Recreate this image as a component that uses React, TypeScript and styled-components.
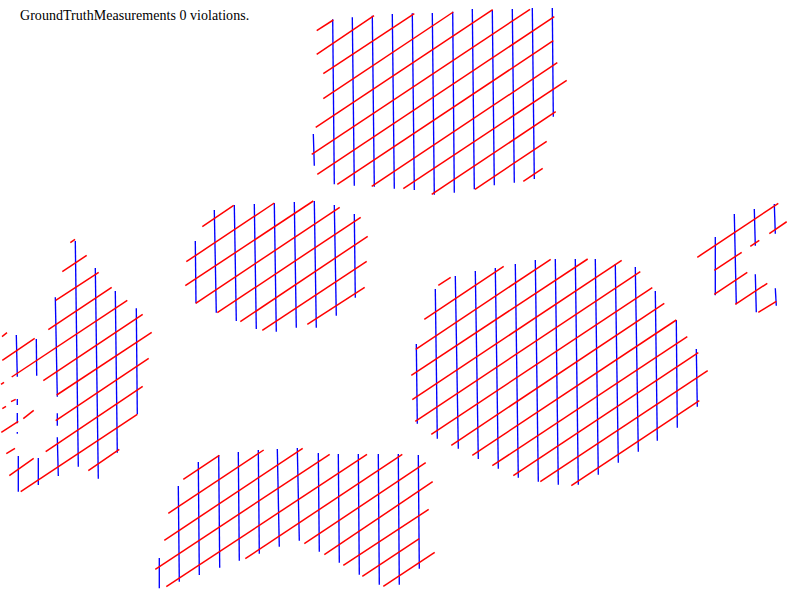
import React from 'react'
import styled, { createGlobalStyle } from 'styled-components'

// x1, y1, x2, y2
type Seg = [number, number, number, number]
type Patch = { blue: Seg[]; red: Seg[] }

const patches: Patch[] = [
  {
    // top
    blue: [
      [332.7, 19.3, 334.3, 184.3], [352.3, 17.3, 354.3, 185.7], [372.3, 15.7, 374.3, 186.7],
      [392.3, 14, 394.3, 188.7], [412.3, 13.3, 414.3, 190], [432.3, 13, 434.3, 194.7],
      [452.7, 11.7, 454.3, 192.7], [472.3, 9, 474.3, 189.3], [492.3, 10, 494.3, 185.3],
      [512.3, 9, 514.3, 182.7], [532.3, 8, 534.3, 179], [552.3, 8, 553.3, 116.7],
      [313.3, 134, 314.3, 165.7],
    ],
    red: [
      [316.7, 30.7, 333.3, 20], [316.7, 54.3, 374, 15.7], [323.3, 73.7, 414.3, 13.7],
      [323.3, 98.7, 453.3, 12], [315.7, 127.3, 492.7, 9.7], [311.7, 154.3, 530, 9.3],
      [317.3, 174.3, 554.3, 16.7], [337.3, 184.3, 553.3, 40.7], [371.7, 186.3, 557.3, 62.7],
      [403.3, 188.7, 566.7, 80.3], [431.7, 194.3, 555.7, 111.7], [475, 189.3, 546.7, 141.3],
      [523.3, 181.3, 542.7, 168.3],
    ],
  },
  {
    // left
    blue: [
      [75.3, 241, 78.3, 466.7], [95.3, 268, 98.3, 478.7], [55.3, 297.3, 57.3, 396.7],
      [115.3, 291, 117.3, 452.7], [136.3, 308.3, 137.3, 414.3], [16.3, 335, 17.3, 376.7],
      [36.3, 339, 36.7, 375.7], [57.3, 413.3, 57.3, 425.7], [57.3, 437.3, 58.3, 476],
      [18.3, 456, 18.3, 491.7], [38.3, 458, 38.3, 485], [17.3, 399, 17.3, 405],
      [17.3, 413, 17.3, 423.3], [17.3, 432, 17.3, 433.7],
    ],
    red: [
      [70.3, 242.7, 75, 239.3], [62.3, 271.7, 86.7, 255.3], [55.7, 300.3, 98.7, 272.3],
      [48.3, 329.7, 111.7, 287.3], [11.7, 377, 127.3, 300.3], [43.3, 380.7, 142.7, 314.3],
      [56.7, 395, 151.7, 332.3], [55.7, 420.7, 148.7, 358.3], [45.7, 451.7, 142.7, 386.3],
      [20.7, 491.7, 137.3, 414.3], [88.3, 470.7, 119.3, 449.3], [2.3, 360.3, 34.7, 338.3],
      [2, 336.7, 7, 332.7], [1, 384.3, 4, 382.3], [11, 401.7, 15.7, 399.3],
      [2.3, 408.7, 6, 406.3], [23.3, 418.7, 33.7, 410.3], [1.3, 432.3, 18.3, 421.3],
      [6.3, 453.7, 15, 448.3], [9.3, 475.7, 33.7, 458.3],
    ],
  },
  {
    // middle
    blue: [
      [195.3, 241, 196, 303.3], [214.3, 210, 216.3, 312.7], [234.3, 205, 236.3, 321],
      [254.3, 204, 256.3, 329], [274.3, 203, 276.3, 331.7], [294.3, 202, 296.3, 327.7],
      [314.3, 201, 316.3, 327.7], [334.3, 205, 336.3, 315.7], [354.3, 214, 355.3, 297.7],
    ],
    red: [
      [202.3, 226.7, 233.7, 205.3], [186.3, 261.7, 274.3, 203], [185.3, 285.7, 313.3, 201],
      [195.7, 303.3, 339.7, 207.3], [217.3, 312.7, 360.7, 217.3], [240.3, 321.7, 367.7, 236.3],
      [262.3, 330.3, 366.7, 261.3], [307.3, 324.3, 364.7, 287.3],
    ],
  },
  {
    // right, large
    blue: [
      [416.3, 344, 417.3, 423.7], [435.3, 289, 437.3, 438.7], [455.3, 276, 458.3, 448.7],
      [475.3, 271, 478.3, 459], [495.3, 268, 498.3, 468.7], [515.3, 264, 518.3, 477.7],
      [535.3, 260, 538.3, 481.7], [555.3, 259, 558.3, 484.7], [575.3, 259, 578.3, 484.7],
      [595.3, 259, 598.3, 474.7], [615.3, 264, 618.3, 462.7], [635.3, 267, 638.3, 451.7],
      [655.3, 291, 657.3, 440.7], [676.3, 320, 677.3, 427.7], [696.3, 349, 697.3, 406.7],
    ],
    red: [
      [438.3, 285.3, 450.7, 277.3], [424.3, 319.3, 503.7, 266.3], [415.7, 349.3, 550.7, 259.3],
      [411.3, 375.3, 587.7, 259], [412.3, 399.7, 621.7, 260.3], [415.3, 421.3, 640.3, 271.7],
      [431.3, 434.3, 652.3, 287.7], [451.3, 445.3, 664.3, 303.3], [472.3, 455.3, 676.3, 320],
      [492.3, 465.7, 687.3, 336.7], [513.3, 475.7, 698.3, 352.7], [540.3, 481.7, 707.7, 370.7],
      [571.3, 485.7, 699.3, 400.7],
    ],
  },
  {
    // bottom
    blue: [
      [159.3, 558, 159.3, 588.3], [178.3, 486, 179.3, 581.7], [198.3, 462, 199.3, 575],
      [218.7, 455, 219.7, 567.7], [238.3, 452, 239.3, 560.7], [258.3, 450, 259.3, 553.7],
      [277.3, 449, 279.3, 546.7], [297.3, 448, 299.3, 540.7], [318.3, 453, 319.3, 551.7],
      [338.3, 454, 339.3, 562.7], [358.3, 454, 359.3, 574.7], [378.3, 454, 379.3, 584.7],
      [398.3, 454, 399.3, 584.7], [418.3, 455, 419.3, 568.7],
    ],
    red: [
      [183.3, 479.3, 219.3, 455.3], [168.3, 513.3, 263.7, 450], [164.3, 540.3, 302.7, 448.3],
      [155.3, 569.3, 329.7, 454.3], [166.3, 586.7, 367, 454.3], [245.3, 558.7, 402.3, 454.3],
      [304.3, 543.7, 425.7, 462.7], [324.3, 554.7, 432.7, 481.7], [343.3, 565.3, 428.7, 509.3],
      [362.3, 576.3, 419.3, 538.7], [383.3, 586.3, 434.7, 552.3],
    ],
  },
  {
    // far right
    blue: [
      [715.3, 237, 715.3, 295.3], [734.3, 214, 736.3, 304.3], [754.3, 209, 755.3, 245.7],
      [755.3, 274.3, 756.3, 312.3], [774.3, 204, 775.3, 233.7], [775.3, 288.3, 776.3, 305.7],
    ],
    red: [
      [697.3, 257.3, 778.3, 203.3], [714.3, 270.3, 741.7, 252.3], [714.3, 294.3, 747.3, 272.3],
      [735.3, 304.3, 767.3, 283.3], [758.3, 312.3, 776.3, 301.3], [750.3, 246.3, 759.3, 240.3],
      [769.3, 233.7, 786.7, 221.7],
    ],
  },
]

const lines = (segs: Seg[]) =>
  segs.map(([x1, y1, x2, y2]) => <line key={`${x1}-${y1}`} x1={x1} y1={y1} x2={x2} y2={y2} />)

export default function App() {
  return (
    <>
      <GlobalStyle />
      <Canvas>
        <Caption>GroundTruthMeasurements 0 violations.</Caption>
        <Plot viewBox="0 0 787 589">
          <BlueLines>{patches.map((p) => lines(p.blue))}</BlueLines>
          <RedLines>{patches.map((p) => lines(p.red))}</RedLines>
        </Plot>
      </Canvas>
    </>
  )
}

const GlobalStyle = createGlobalStyle`
  html, body {
    margin: 0;
    background: #fff;
  }
`

const Canvas = styled.div`
  position: relative;
  width: 787px;
  height: 589px;
  overflow: hidden;
  box-sizing: border-box;
  padding: 8px 0 0 20px;
`

const Caption = styled.div`
  font-family: 'Liberation Serif', 'Times New Roman', serif;
  font-size: 14px;
  letter-spacing: 0.04px;
  line-height: 16px;
  color: #000;
`

const Plot = styled.svg`
  position: absolute;
  top: 0;
  left: 0;
  width: 787px;
  height: 589px;
`

const BlueLines = styled.g`
  stroke: #0000ff;
  stroke-width: 1.35;
  fill: none;
`

const RedLines = styled.g`
  stroke: #ff0000;
  stroke-width: 1.5;
  fill: none;
`
